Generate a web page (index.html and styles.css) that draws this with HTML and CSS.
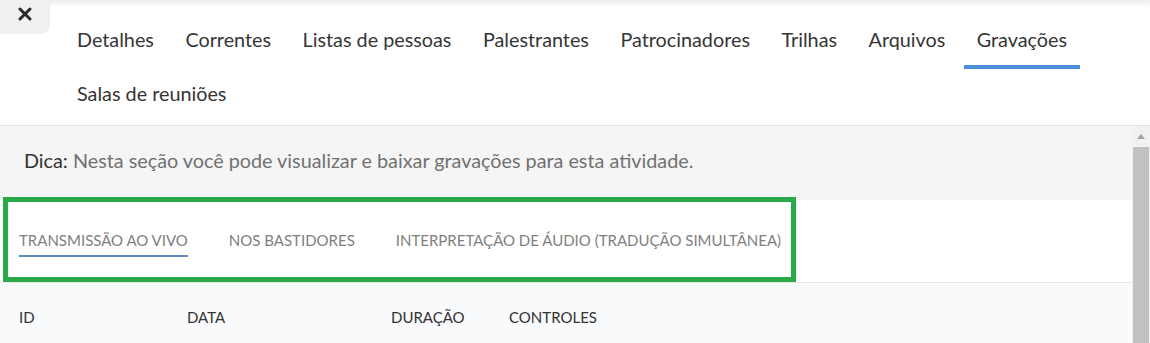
FILE: index.html
```html
<!DOCTYPE html>
<html lang="pt-BR">
<head>
<meta charset="utf-8">
<title>Gravações</title>
<link rel="stylesheet" href="styles.css">
</head>
<body>
<div class="page">
  <header class="header">
    <button class="close" aria-label="Fechar">
      <svg width="14" height="14" viewBox="0 0 14 14"><path d="M2 2 L12 12 M12 2 L2 12" stroke="#2b2b2b" stroke-width="3" stroke-linecap="round"/></svg>
    </button>
    <nav class="nav">
      <a class="nav-tab">Detalhes</a>
      <a class="nav-tab">Correntes</a>
      <a class="nav-tab">Listas de pessoas</a>
      <a class="nav-tab">Palestrantes</a>
      <a class="nav-tab">Patrocinadores</a>
      <a class="nav-tab">Trilhas</a>
      <a class="nav-tab">Arquivos</a>
      <a class="nav-tab active">Gravações</a>
      <a class="nav-tab">Salas de reuniões</a>
    </nav>
  </header>
  <div class="body">
    <main class="content">
      <div class="tip"><strong>Dica:</strong> Nesta seção você pode visualizar e baixar gravações para esta atividade.</div>
      <div class="subbar">
        <div class="subtabs">
          <a class="subtab active">TRANSMISSÃO AO VIVO</a>
          <a class="subtab">NOS BASTIDORES</a>
          <a class="subtab">INTERPRETAÇÃO DE ÁUDIO (TRADUÇÃO SIMULTÂNEA)</a>
        </div>
      </div>
      <div class="thead">
        <span>ID</span>
        <span>DATA</span>
        <span>DURAÇÃO</span>
        <span>CONTROLES</span>
      </div>
    </main>
    <div class="scrollbar">
      <div class="arrow"></div>
      <div class="thumb"></div>
    </div>
  </div>
</div>
</body>
</html>
```
FILE: styles.css
```css
* { box-sizing: border-box; }
html, body { margin: 0; padding: 0; }
body {
  font-family: Lato, "Open Sans", sans-serif;
  background: #fff;
  width: 1150px;
  height: 343px;
  overflow: hidden;
}
.page { display: flex; flex-direction: column; height: 343px; }

.header {
  display: flex;
  align-items: flex-start;
  height: 126px;
  border-bottom: 1px solid #e3e3e3;
  box-shadow: inset 0 7px 7px -5px rgba(0,0,0,0.10);
  background: #fff;
}
.close {
  width: 50px;
  height: 34px;
  border: 0;
  padding: 0;
  background: #f0f0f0;
  border-bottom-right-radius: 9px;
  display: flex;
  align-items: center;
  justify-content: center;
  padding-bottom: 6px;
  flex: none;
}
.nav {
  display: flex;
  flex-wrap: wrap;
  padding-top: 15px;
  margin-left: 14px;
  width: 1050px;
  column-gap: 5.5px;
}
.nav-tab {
  font-size: 19.8px;
  line-height: 24px;
  color: #353535;
  padding: 12px 13px 14px;
  border-bottom: 4px solid transparent;
  white-space: nowrap;
}
.nav-tab.active { border-bottom-color: #4a8fd8; }

.body { display: flex; flex: 1; min-height: 0; }
.content { flex: 1; display: flex; flex-direction: column; }
.scrollbar {
  width: 18px;
  background: #f1f1f1;
  display: flex;
  flex-direction: column;
  align-items: center;
  flex: none;
}
.arrow {
  margin-top: 8px;
  width: 0; height: 0;
  border-left: 4px solid transparent;
  border-right: 4px solid transparent;
  border-bottom: 5px solid #a3a3a3;
}
.thumb {
  margin-top: 8px;
  width: 16px;
  flex: 1;
  background: #c1c1c1;
}

.tip {
  background: #f5f5f5;
  height: 74px;
  padding: 22px 24px 0;
  font-size: 19.8px;
  line-height: 24px;
  color: #717171;
}
.tip strong { font-weight: 400; color: #333; }

.subbar {
  background: #fff;
  height: 83px;
  border-bottom: 1px solid #e5e5e5;
  padding: 2px 0 0 8px;
}
.subtabs {
  display: inline-flex;
  align-items: center;
  height: 75px;
  gap: 41px;
  padding: 0 10px 0 11px;
  outline: 5px solid #2aa94b;
}
.subtab {
  font-size: 15px;
  line-height: 20px;
  color: #808080;
  padding: 8px 0 5px;
  border-bottom: 2px solid transparent;
  white-space: nowrap;
}
.subtab.active { border-bottom-color: #5f8bbb; }

.thead {
  flex: 1;
  background: #f9fafb;
  display: grid;
  grid-template-columns: 168px 204px 118px auto;
  align-content: start;
  padding: 24px 0 0 19px;
  font-size: 15px;
  line-height: 20px;
  color: #333;
}
```
